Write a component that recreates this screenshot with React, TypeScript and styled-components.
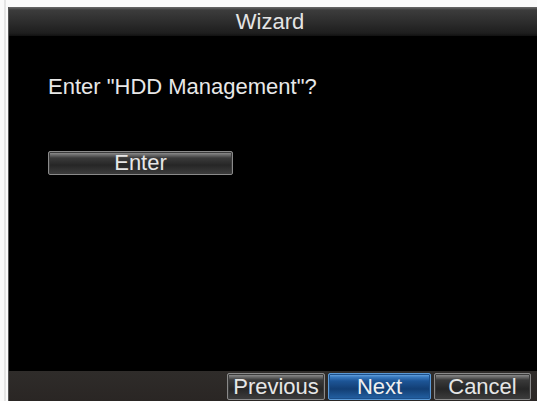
import styled, { createGlobalStyle, css } from "styled-components";

const Global = createGlobalStyle`
  html, body {
    margin: 0;
    padding: 0;
    background: #fff;
    font-family: "Liberation Sans", Arial, sans-serif;
  }
`;

const Page = styled.div`
  width: 537px;
  height: 401px;
  padding: 7px 0 0 8px;
  box-sizing: border-box;
  background: linear-gradient(to right, #fafafa 0, #fafafa 4px, #cfcfcf 5px, #fafafa 6px);
`;

const Window = styled.div`
  width: 529px;
  height: 394px;
  display: flex;
  flex-direction: column;
  background: #000;
  border-left: 1px solid #555;
  box-sizing: border-box;
`;

const TitleBar = styled.div`
  height: 29px;
  display: flex;
  align-items: center;
  justify-content: center;
  background: linear-gradient(to bottom, #6a6a6a 0, #3c3c3c 3px, #2e2e2e 14px, #1e1e1e 26px, #111 29px);
  color: #e4e4e4;
  font-size: 22px;
  padding-right: 6px;
`;

const Body = styled.div`
  flex: 1;
  display: flex;
  flex-direction: column;
  padding: 38px 0 0 39px;
  color: #e8e8e8;
`;

const Question = styled.div`
  font-size: 22px;
  line-height: 26px;
`;

const Button = styled.div<{ $primary?: boolean; $width: number; $height: number }>`
  width: ${(p) => p.$width}px;
  height: ${(p) => p.$height}px;
  box-sizing: border-box;
  display: flex;
  align-items: center;
  justify-content: center;
  font-size: 22px;
  color: #e6e6e6;
  border-radius: 2px;
  border: 1px solid #8a8a8a;
  box-shadow: inset 0 0 0 1px #3a3a3a;
  background: linear-gradient(to bottom, #9a9a9a 0, #6a6a6a 3px, #3a3a3a 6px, #262626 60%, #3c3c3c 100%);
  ${(p) =>
    p.$primary &&
    css`
      border-color: #5a9ad8;
      box-shadow: inset 0 0 0 1px #1c4f8a;
      background: linear-gradient(to bottom, #7ab3ea 0, #3a7bc0 3px, #1d5596 7px, #123e74 60%, #2461a4 100%);
      color: #f0f0f0;
    `}
`;

const EnterRow = styled.div`
  margin-top: 51px;
`;

const Footer = styled.div`
  height: 30px;
  display: flex;
  justify-content: flex-end;
  align-items: flex-start;
  gap: 3px;
  padding: 2px 6px 0 0;
  box-sizing: border-box;
  background: linear-gradient(to bottom, #2f2c2a, #2a2624);
`;

export default function App() {
  return (
    <>
      <Global />
      <Page>
        <Window>
          <TitleBar>Wizard</TitleBar>
          <Body>
            <Question>Enter "HDD Management"?</Question>
            <EnterRow>
              <Button $width={185} $height={24}>
                Enter
              </Button>
            </EnterRow>
          </Body>
          <Footer>
            <Button $width={98} $height={27}>
              Previous
            </Button>
            <Button $width={103} $height={27} $primary>
              Next
            </Button>
            <Button $width={97} $height={27}>
              Cancel
            </Button>
          </Footer>
        </Window>
      </Page>
    </>
  );
}
